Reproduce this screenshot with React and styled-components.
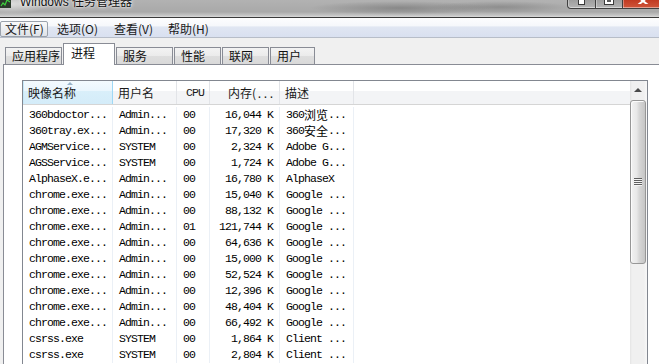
import React from 'react';
import styled, { createGlobalStyle } from 'styled-components';

const GlobalStyle = createGlobalStyle`
  html, body {
    margin: 0;
    padding: 0;
    background: #fff;
    overflow: hidden;
  }
  body {
    font-family: "Noto Sans CJK SC", "Liberation Sans", sans-serif;
  }
`;

const menus = [
    { label: '文件(F)', width: 48, active: true },
    { label: '选项(O)', width: 53 },
    { label: '查看(V)', width: 50 },
    { label: '帮助(H)', width: 50 },
];

const tabs = [
    { label: '应用程序', width: 57 },
    { label: '进程', width: 52, active: true },
    { label: '服务', width: 57 },
    { label: '性能', width: 47 },
    { label: '联网', width: 47 },
    { label: '用户', width: 45 },
];

const rows = [
    ['360bdoctor...', 'Admin...', '00', '16,044 K', '360浏览...'],
    ['360tray.ex...', 'Admin...', '00', '17,320 K', '360安全...'],
    ['AGMService...', 'SYSTEM', '00', '2,324 K', 'Adobe G...'],
    ['AGSService...', 'SYSTEM', '00', '1,724 K', 'Adobe G...'],
    ['AlphaseX.e...', 'Admin...', '00', '16,780 K', 'AlphaseX'],
    ['chrome.exe...', 'Admin...', '00', '15,040 K', 'Google ...'],
    ['chrome.exe...', 'Admin...', '00', '88,132 K', 'Google ...'],
    ['chrome.exe...', 'Admin...', '01', '121,744 K', 'Google ...'],
    ['chrome.exe...', 'Admin...', '00', '64,636 K', 'Google ...'],
    ['chrome.exe...', 'Admin...', '00', '15,000 K', 'Google ...'],
    ['chrome.exe...', 'Admin...', '00', '52,524 K', 'Google ...'],
    ['chrome.exe...', 'Admin...', '00', '12,396 K', 'Google ...'],
    ['chrome.exe...', 'Admin...', '00', '48,404 K', 'Google ...'],
    ['chrome.exe...', 'Admin...', '00', '66,492 K', 'Google ...'],
    ['csrss.exe', 'SYSTEM', '00', '1,864 K', 'Client ...'],
    ['csrss.exe', 'SYSTEM', '00', '2,804 K', 'Client ...'],
];

// splits CJK runs out so they get the wider font
const Mixed = ({ text }) =>
    text.split(/([\u4e00-\u9fff]+)/).map((part, i) =>
        /[\u4e00-\u9fff]/.test(part) ? <Cjk key={i}>{part}</Cjk> : part
    );

const App = () => {
    return (
        <>
            <GlobalStyle />
            <Window>
                <TitleBar>
                    <AppIcon width="11" height="10" viewBox="0 0 11 10">
                        <rect x="0" y="0" width="11" height="10" fill="#2c3a2c" />
                        <polyline points="1,8 3,5 5,7 7,2 10,4" fill="none" stroke="#3fd23f" strokeWidth="1.2" />
                    </AppIcon>
                    <TitleText>Windows 任务管理器</TitleText>
                    <Controls>
                        <CtrlButton kind="min"><MinGlyph /></CtrlButton>
                        <CtrlButton kind="max"><MaxGlyph /></CtrlButton>
                        <CtrlButton kind="close">
                            <svg width="12" height="4" viewBox="0 3 12 4">
                                <path d="M1 0 L6 4 L11 0 M1 8 L6 4 L11 8" stroke="#fff" strokeWidth="2" fill="none" />
                            </svg>
                        </CtrlButton>
                    </Controls>
                </TitleBar>

                <MenuBar>
                    { menus.map(m => <MenuItem key={ m.label } w={ m.width } active={ m.active }>{ m.label }</MenuItem>) }
                </MenuBar>

                <TabStrip>
                    { tabs.map(t => <Tab key={ t.label } w={ t.width } active={ t.active }>{ t.label }</Tab>) }
                </TabStrip>

                <Panel>
                    <ListView>
                        <Table>
                            <Header>
                                <HeadCell sorted>
                                    <SortArrow />
                                    映像名称
                                </HeadCell>
                                <HeadCell>用户名</HeadCell>
                                <HeadCell right mono>CPU</HeadCell>
                                <HeadCell right>内存(<MonoDots>...</MonoDots></HeadCell>
                                <HeadCell>描述</HeadCell>
                                <HeadCell last />
                            </Header>
                            <Body>
                                { rows.map((r, i) => (
                                    <Row key={ i }>
                                        <Cell>{ r[0] }</Cell>
                                        <Cell>{ r[1] }</Cell>
                                        <Cell>{ r[2] }</Cell>
                                        <Cell right>{ r[3] }</Cell>
                                        <Cell><Mixed text={ r[4] } /></Cell>
                                        <Cell last />
                                    </Row>
                                )) }
                            </Body>
                        </Table>
                        <ScrollBar>
                            <ScrollButton><UpArrow /></ScrollButton>
                            <Thumb><Grip /></Thumb>
                        </ScrollBar>
                    </ListView>
                </Panel>
            </Window>
        </>
    );
}

export default App;

const Window = styled.div`
    width: 659px;
    height: 364px;
    overflow: hidden;
    display: flex;
    flex-direction: column;
    background: #f0f0f0;
`

const TitleBar = styled.div`
    flex: none;
    height: 17px;
    display: flex;
    align-items: flex-start;
    overflow: hidden;
    border-bottom: 1px solid #3a3a3a;
    background:
        radial-gradient(ellipse 90px 7px at 400px 8px, rgba(70, 70, 70, 0.35), transparent),
        radial-gradient(ellipse 70px 6px at 500px 7px, rgba(70, 70, 70, 0.3), transparent),
        radial-gradient(ellipse 40px 10px at 10px 4px, rgba(235, 235, 235, 0.8), transparent),
        linear-gradient(to bottom, #b2b2b2 0%, #a9a9a9 70%, #c4c4c4 90%, #dadada 100%);
`

const AppIcon = styled.svg`
    flex: none;
    margin-top: -2px;
`

const TitleText = styled.div`
    margin: -4px 0 0 9px;
    font-family: "Liberation Sans", "Noto Sans CJK SC", sans-serif;
    font-size: 12px;
    line-height: 12px;
    color: #111;
    white-space: nowrap;
    text-shadow: 0 0 4px rgba(255, 255, 255, 0.9), 0 0 2px rgba(255, 255, 255, 0.9);
`

const Controls = styled.div`
    margin-left: auto;
    margin-right: -4px;
    display: flex;
    align-items: flex-start;
`

const CtrlButton = styled.div`
    box-sizing: border-box;
    height: 9px;
    width: ${ p => p.kind === 'close' ? 40 : p.kind === 'min' ? 29 : 27 }px;
    border: 1px solid #404040;
    border-top: none;
    border-left: ${ p => p.kind === 'min' ? '1px solid #404040' : 'none' };
    border-radius: ${ p => p.kind === 'min' ? '0 0 0 4px' : '0' };
    box-shadow: inset 0 -1px 0 rgba(255, 255, 255, 0.45), inset 1px 0 0 rgba(255, 255, 255, 0.35);
    background: ${ p => p.kind === 'close'
        ? 'linear-gradient(to bottom, #c13a22, #d0553a)'
        : 'linear-gradient(to bottom, #9e9e9e, #b4b4b4)' };
    display: flex;
    justify-content: center;
    align-items: flex-start;
    overflow: hidden;
`

const MinGlyph = styled.div`
    width: 5px;
    height: 4px;
    background: #fff;
    border: 1px solid #3a3a3a;
    border-top: none;
`

const MaxGlyph = styled.div`
    width: 4px;
    height: 2px;
    background: #5a5a5a;
    border: 2px solid #fff;
    border-top: none;
    outline: 1px solid #3a3a3a;
`

const MenuBar = styled.div`
    flex: none;
    height: 19px;
    display: flex;
    align-items: flex-end;
    gap: 4px;
    border-bottom: 1px solid #b7bdc8;
    background: linear-gradient(to bottom, #fdfdfe 0%, #f6f8fb 40%, #e0e6f2 48%, #d9e0f0 100%);
`

const MenuItem = styled.div`
    box-sizing: border-box;
    width: ${ p => p.w }px;
    height: 16px;
    padding-left: 4px;
    font-size: 12px;
    line-height: 14px;
    color: #1a1a1a;
    white-space: nowrap;
    border: 1px solid ${ p => p.active ? '#9aa1ab' : 'transparent' };
    border-radius: 2px;
    background: ${ p => p.active ? 'linear-gradient(to bottom, #fafafa, #eceef1 50%, #dfe2e7)' : 'none' };
`

const TabStrip = styled.div`
    flex: none;
    height: 26px;
    padding-left: 5px;
    display: flex;
    align-items: flex-end;
    gap: 1px;
    background: #f0f0f0;
`

const Tab = styled.div`
    box-sizing: border-box;
    width: ${ p => p.w }px;
    height: ${ p => p.active ? 22 : 17 }px;
    margin-bottom: ${ p => p.active ? -1 : 0 }px;
    position: relative;
    z-index: ${ p => p.active ? 1 : 0 };
    padding-left: ${ p => p.active ? 7 : 6 }px;
    border: 1px solid #898c95;
    border-bottom: none;
    font-size: 12px;
    line-height: ${ p => p.active ? 18 : 16 }px;
    color: #111;
    white-space: nowrap;
    background: ${ p => p.active ? '#fff' : 'linear-gradient(to bottom, #f3f3f3, #ebebeb 50%, #dedede 52%, #d9d9d9)' };
`

const Panel = styled.div`
    flex: 1;
    min-height: 0;
    margin-left: 3px;
    border-top: 1px solid #898c95;
    border-left: 1px solid #898c95;
    background: #fff;
    padding: 15px 0 0 18px;
    display: flex;
    flex-direction: column;
`

const ListView = styled.div`
    width: 626px;
    flex: 1;
    box-sizing: border-box;
    border: 1px solid #828790;
    border-bottom: none;
    display: flex;
    overflow: hidden;
`

const Table = styled.div`
    flex: 1;
    display: flex;
    flex-direction: column;
`

const columns = '90px 64px 33px 70px 74px 1fr';

const Header = styled.div`
    flex: none;
    display: grid;
    grid-template-columns: ${ columns };
    height: 23px;
    border-bottom: 1px solid #d5d5d5;
    background: linear-gradient(to bottom, #ffffff 0%, #ffffff 42%, #f3f4f6 43%, #f3f4f6 100%);
`

const HeadCell = styled.div`
    position: relative;
    box-sizing: border-box;
    padding: 1px ${ p => p.right ? 5 : 6 }px 0 ${ p => p.right ? 0 : 5 }px;
    text-align: ${ p => p.right ? 'right' : 'left' };
    font-family: ${ p => p.mono ? '"Liberation Mono", monospace' : '"Noto Sans CJK SC", sans-serif' };
    font-size: ${ p => p.mono ? '11.5px' : '12px' };
    letter-spacing: ${ p => p.mono ? '-0.9px' : '0' };
    line-height: 22px;
    color: #1a1a1a;
    white-space: nowrap;
    overflow: hidden;
    border-right: ${ p => p.last ? 'none' : p.sorted ? '1px solid #9fd8f5' : '1px solid #e2e4e8' };
    box-shadow: ${ p => p.sorted ? 'inset 1px 0 0 #c6e8f9' : 'none' };
    background: ${ p => p.sorted ? 'linear-gradient(to bottom, #f3fafe 0%, #eaf6fd 42%, #d9effa 43%, #d4ecf9 100%)' : 'transparent' };
`

const MonoDots = styled.span`
    font-family: "Liberation Mono", monospace;
    font-size: 11.5px;
    letter-spacing: -0.9px;
`

const SortArrow = styled.span`
    position: absolute;
    top: 1px;
    left: 44px;
    width: 0;
    height: 0;
    border-left: 3px solid transparent;
    border-right: 3px solid transparent;
    border-bottom: 3px solid #97b3c9;
`

const Body = styled.div`
    flex: 1;
    padding-top: 2px;
`

const Row = styled.div`
    display: grid;
    grid-template-columns: ${ columns };
    height: 16px;
`

const Cell = styled.div`
    box-sizing: border-box;
    padding: 0 ${ p => p.right ? 6 : 0 }px 0 ${ p => p.right ? 0 : 6 }px;
    text-align: ${ p => p.right ? 'right' : 'left' };
    font-family: "Liberation Mono", "Noto Sans CJK SC", monospace;
    font-size: 11.5px;
    letter-spacing: -0.9px;
    line-height: 16px;
    color: #000;
    white-space: nowrap;
    overflow: hidden;
    border-right: ${ p => p.last ? 'none' : '1px solid #ebf0f6' };
`

const Cjk = styled.span`
    display: inline-block;
    vertical-align: top;
    font-family: "Noto Sans CJK SC", sans-serif;
    font-size: 12px;
    line-height: 16px;
    letter-spacing: 0;
`

const ScrollBar = styled.div`
    flex: none;
    width: 17px;
    display: flex;
    flex-direction: column;
    background: linear-gradient(to right, #e4e4e4 0px, #f0f0f0 2px, #f0f0f0 14px, #f6f6f6 16px);
`

const ScrollButton = styled.div`
    height: 18px;
    display: flex;
    justify-content: center;
    align-items: center;
`

const UpArrow = styled.span`
    width: 0;
    height: 0;
    border-left: 4px solid transparent;
    border-right: 4px solid transparent;
    border-bottom: 4px solid #4a4a4a;
    margin-left: -1px;
`

const Thumb = styled.div`
    box-sizing: border-box;
    width: 16px;
    height: 164px;
    margin-top: 1px;
    border: 1px solid #979797;
    border-radius: 3px;
    background: linear-gradient(to right, #f2f2f2 0%, #e8e8e8 40%, #d6d6d6 60%, #c6c6c6 100%);
    box-shadow: inset 1px 1px 0 #fbfbfb;
    display: flex;
    justify-content: center;
    align-items: center;
`

const Grip = styled.div`
    width: 8px;
    height: 8px;
    background: repeating-linear-gradient(to bottom, #5e5e5e 0px, #5e5e5e 1px, #f4f4f4 1px, #f4f4f4 2px);
`
